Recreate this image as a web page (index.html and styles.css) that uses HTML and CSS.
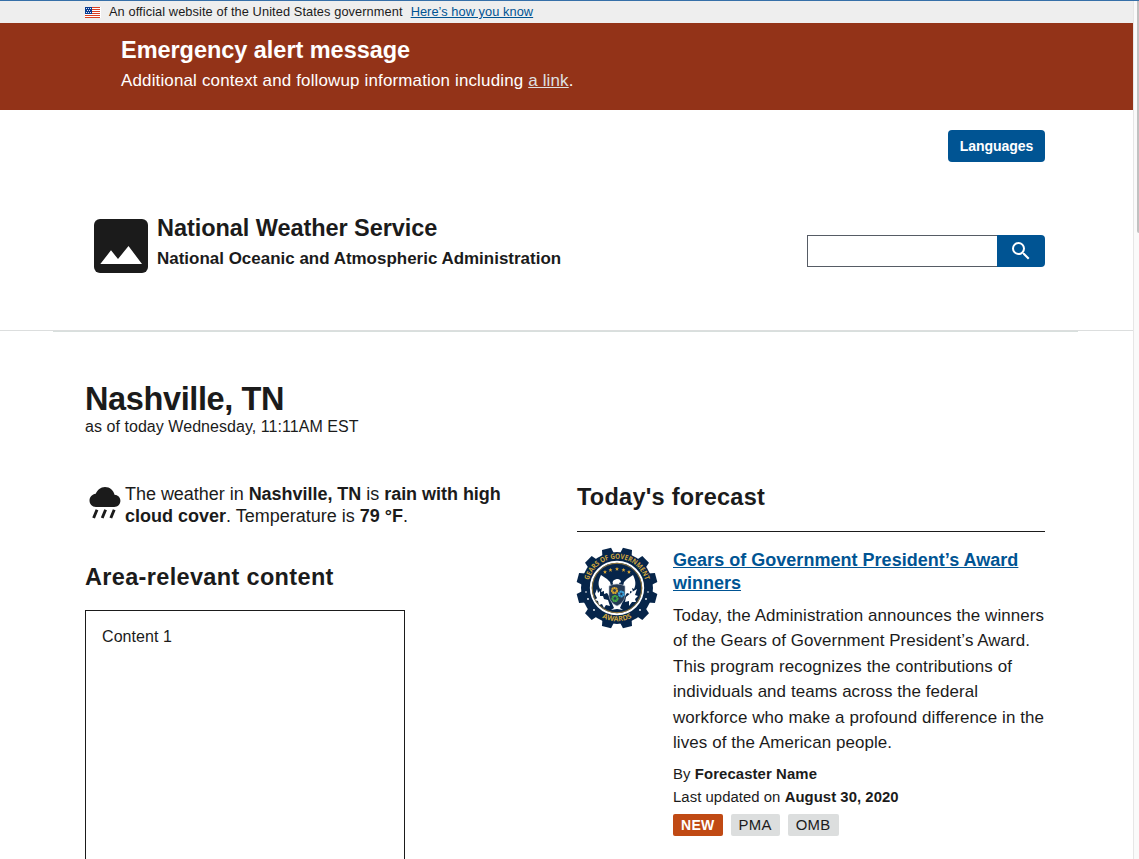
FILE: index.html
```html
<!DOCTYPE html>
<html lang="en">
<head>
<meta charset="utf-8">
<title>National Weather Service</title>
<link rel="stylesheet" href="styles.css">
</head>
<body>
<div class="viewport">
<div class="page">
  <div class="gov-banner">
    <svg class="flag" viewBox="0 0 16 11" shape-rendering="crispEdges"><path fill="#fff" d="M0 0h16v11H0z"/><path fill="#db3e1f" d="M0 0h15v1H0zM0 2h15v1H0zM0 4h15v1H0zM0 6h15v1H0zM0 8h15v1H0zM0 10h15v1H0z"/><path fill="#0b3d91" d="M0 0h7v7H0z"/><path fill="#dfe6f5" d="M1 1h1v1H1zM3 1h1v1H3zM5 1h1v1H5zM2 3h1v1H2zM4 3h1v1H4zM1 5h1v1H1zM3 5h1v1H3zM5 5h1v1H5z"/></svg>
    <span class="gov-text">An official website of the United States government</span>
    <a class="gov-link" href="#">Here’s how you know</a>
  </div>
  <section class="alert">
    <h3 class="alert-title">Emergency alert message</h3>
    <p class="alert-text">Additional context and followup information including <a href="#">a link</a>.</p>
  </section>
  <header class="header">
    <div class="header-inner">
      <button class="languages">Languages</button>
      <div class="brand-row">
        <div class="brand">
          <svg class="logo" viewBox="0 0 54 54"><rect width="54" height="54" rx="6" fill="#1b1b1b"/><path d="M6.300 45 17 31.300l7 8.700 10.500-13L48 45z" fill="#fff"/></svg>
          <div class="brand-text">
            <div class="brand-name">National Weather Service</div>
            <div class="brand-parent">National Oceanic and Atmospheric Administration</div>
          </div>
        </div>
        <form class="search">
          <input class="search-input" type="text" aria-label="Search">
          <button class="search-button" type="button" aria-label="Search"><svg viewBox="0 0 24 24" width="24" height="24"><path fill="#fff" d="M15.500 14h-.790l-.280-.270A6.470 6.470 0 0 0 16 9.500 6.500 6.500 0 1 0 9.500 16c1.610 0 3.090-.590 4.230-1.570l.270.280v.790l5 4.990L20.490 19zm-6 0C7.010 14 5 11.990 5 9.500S7.010 5 9.500 5 14 7.010 14 9.500 11.990 14 9.500 14z"/></svg></button>
        </form>
      </div>
    </div>
    <div class="nav-rule"></div>
  </header>
  <main class="main">
    <h1 class="place">Nashville, TN</h1>
    <p class="as-of">as of today Wednesday, 11:11AM EST</p>
    <div class="columns">
      <div class="left">
        <div class="weather">
          <svg class="rain" viewBox="0 0 32 33"><path fill="#1b1b1b" d="M7 21C3 21 .500 18 .500 14.500c0-3.600 2.700-6 6.200-6.700C8.300 4 11.600 1 16 1c4.800 0 8.700 3.400 9.500 7.800 3.400.3 5.900 2.600 5.900 6 0 3.500-2.700 6.200-6.200 6.200z"/><path stroke="#1b1b1b" stroke-width="2.900" d="m8 23.800-3.400 8.200m12-8.200-3.400 8.200m12-8.200-3.400 8.200"/></svg>
          <p class="weather-text"><span class="line w1">The weather in <b>Nashville, TN</b> is <b>rain with high</b></span> <span class="line w2"><b>cloud cover</b>. Temperature is <b>79 °F</b>.</span></p>
        </div>
        <h2 class="area-title">Area-relevant content</h2>
        <div class="box">Content 1</div>
      </div>
      <div class="right">
        <h2 class="forecast-title">Today's forecast</h2>
        <article class="item">
          <svg class="seal" viewBox="-40 -40 80 80">
            <defs>
              <path id="arcTop" d="M-28.300 6a29 29 0 1 1 56.600 0"/>
              <path id="arcBottom" d="M-33.300 0a33.300 33.300 0 0 0 66.600 0"/>
              <path id="tooth" d="M-6-34-4.700-40.500H4.700L6-34z"/>
              <path id="star" d="m0-2 .6 1.300 1.400.1-1.100.9.400 1.400L0 .9l-1.300.8.400-1.400L-2-.6l1.400-.1z"/>
            </defs>
            <g fill="#06254a">
              <circle r="36"/>
              <use href="#tooth" transform="rotate(15)"/><use href="#tooth" transform="rotate(45)"/><use href="#tooth" transform="rotate(75)"/><use href="#tooth" transform="rotate(105)"/><use href="#tooth" transform="rotate(135)"/><use href="#tooth" transform="rotate(165)"/><use href="#tooth" transform="rotate(195)"/><use href="#tooth" transform="rotate(225)"/><use href="#tooth" transform="rotate(255)"/><use href="#tooth" transform="rotate(285)"/><use href="#tooth" transform="rotate(315)"/><use href="#tooth" transform="rotate(345)"/>
            </g>
            <circle r="26.200" fill="#06254a" stroke="#fff" stroke-width="1.900"/>
            <circle r="24.700" fill="none" stroke="#b58a35" stroke-width=".8"/>
            <text class="seal-text"><textPath href="#arcTop" startOffset="50%" text-anchor="middle" textLength="76" lengthAdjust="spacingAndGlyphs">GEARS OF GOVERNMENT</textPath></text>
            <text class="seal-text"><textPath href="#arcBottom" startOffset="50%" text-anchor="middle" textLength="31" lengthAdjust="spacingAndGlyphs">AWARDS</textPath></text>
            <g fill="#d9a532"><use href="#star" x="-12" y="-16"/><use href="#star" x="-6.500" y="-18"/><use href="#star" y="-19"/><use href="#star" x="6.500" y="-18"/><use href="#star" x="12" y="-16"/></g>
            <g fill="#fff">
              <path d="M-4-4c-1-2 0-4 3-4.700 3-.7 5 .7 5 3L2-5l1 3h-7z"/>
              <path d="M-5 2-7-6-10-9-16-13C-19-7-19-3-17 1l2-1-1 4 3-1 0 3 3-1 2 3zM5 2 7-6 10-9 16-13C19-7 19-3 17 1l-2-1 1 4-3-1 0 3-3-1-2 3z"/>
              <path d="m-20 1 1 4 2-2 0 5 3 0 1 3 4 1 2 6-4-1-2 3-2-4-3 1-1-4-3-1 2-2-2-4zM20 1l-5 3-6 5-1 5 4-1 0 5 3-4 4 0-1-3 3-3-3-1z"/>
              <path d="m-6 13 3 7-3 2 6-1 6 1-3-2 3-7z"/>
              <circle cx="-29" cy="11" r=".9"/><circle cx="29" cy="11" r=".9"/><circle cx="-31" cy="4" r=".8"/><circle cx="31" cy="4" r=".8"/><circle cx="-23" cy="22" r=".9"/><circle cx="23" cy="22" r=".9"/>
            </g>
            <path d="M-8-2Q0-6 8-2v10q-1 7-8 10-7-3-8-10z" fill="#253a55" stroke="#aeb9c6" stroke-width=".6"/>
            <g fill="none" stroke-width="2.200" stroke-dasharray="1.800 .3"><circle cx="-2.500" cy="2.500" r="2.500" stroke="#dba52d"/><circle cx="4.300" cy="6" r="2.300" stroke="#39a1dc"/><circle cx="-2" cy="10.500" r="2.500" stroke="#45a846"/></g>
          </svg>
          <div class="item-body">
            <h3 class="item-title"><a href="#"><span class="line t1">Gears of Government President’s Award</span> <span class="line t2">winners</span></a></h3>
            <p class="item-text"><span class="line p1">Today, the Administration announces the winners</span> <span class="line p2">of the Gears of Government President’s Award.</span> <span class="line p3">This program recognizes the contributions of</span> <span class="line p4">individuals and teams across the federal</span> <span class="line p5">workforce who make a profound difference in the</span> <span class="line p6">lives of the American people.</span></p>
            <div class="meta">By <b>Forecaster Name</b></div>
            <div class="meta meta-date">Last updated on <b>August 30, 2020</b></div>
            <div class="tags"><span class="tag tag-new">NEW</span><span class="tag">PMA</span><span class="tag">OMB</span></div>
          </div>
        </article>
      </div>
    </div>
  </main>
</div>
<div class="scroll-track"><div class="scroll-thumb"></div></div>
</div>
</body>
</html>
```
FILE: styles.css
```css
* { box-sizing: border-box; }
body, h1, h2, h3, p { margin: 0; }
body { font-family: "Liberation Sans", Arial, sans-serif; color: #1b1b1b; background: #fff; overflow: hidden; }
a { color: #005493; text-decoration: underline; }
button, input { font-family: inherit; }
.viewport { display: flex; height: 859px; overflow: hidden; border-top: 1px solid #366fa8; }
.page { flex: 1; min-width: 0; }
.line { display: block; white-space: nowrap; }

.scroll-track { width: 6px; border-left: 1px solid #e6e6e6; background: #fafafa; display: flex; justify-content: flex-end; }
.scroll-thumb { width: 2px; height: 232px; background: #c1c1c1; border-radius: 0 0 0 2px; }

.gov-banner { height: 22px; background: #eee; padding: 0 0 1px 85px; display: flex; align-items: center; font-size: 12.8px; white-space: nowrap; }
.flag { width: 16px; height: 11px; margin: 1px 8px 0 0; }
.gov-text { letter-spacing: .085px; }
.gov-link { margin-left: 8px; letter-spacing: .06px; }

.alert { height: 87px; background: #933318; color: #fff; padding: 13px 0 0 121px; }
.alert-title { font-size: 23.500px; line-height: 28px; letter-spacing: -.04px; }
.alert-text { font-size: 16.960px; line-height: 24px; margin-top: 5px; letter-spacing: .165px; }
.alert-text a { color: #dfe1e2; }

.header { height: 222px; display: flex; flex-direction: column; }
.header-inner { height: 221px; border-bottom: 1px solid #dcdede; padding: 20px 88px 0 94px; display: flex; flex-direction: column; align-items: flex-end; }
.nav-rule { height: 1px; width: 1025px; margin-left: 53px; background: #d8dfdd; }
.languages { width: 97px; height: 32px; border: 0; border-radius: 4px; background: #005493; color: #fff; font-weight: 700; font-size: 14.080px; letter-spacing: -.1px; padding: 0; }
.brand-row { align-self: stretch; display: flex; justify-content: space-between; margin-top: 52px; }
.brand { display: flex; margin-top: 5px; }
.logo { width: 54px; height: 54px; margin-right: 9px; }
.brand-text { font-weight: 700; }
.brand-name { font-size: 23.500px; line-height: 28px; margin-top: -5px; letter-spacing: -.06px; }
.brand-parent { font-size: 16.960px; line-height: 20px; margin-top: 7px; letter-spacing: .015px; }
.search { display: flex; height: 32px; margin-top: 21px; }
.search-input { width: 190px; height: 32px; border: 1px solid #565c65; border-right: 0; border-radius: 0; background: #fff; padding: 0 8px; }
.search-button { width: 48px; height: 32px; border: 0; border-radius: 0 4px 4px 0; background: #005493; padding: 0; display: flex; align-items: center; justify-content: center; }

.main { padding: 48px 88px 0 85px; }
.place { font-size: 32.500px; line-height: 38px; letter-spacing: -.38px; }
.as-of { font-size: 16px; line-height: 18px; letter-spacing: .05px; }
.columns { display: flex; justify-content: space-between; margin-top: 47px; }
.left { width: 440px; }
.weather { display: flex; }
.rain { width: 32px; height: 33px; margin: 3px 4px 0; }
.weather-text { font-size: 18px; line-height: 22px; }
.w1 { letter-spacing: -.03px; }
.area-title { font-size: 23.500px; line-height: 28px; margin-top: 36px; letter-spacing: .34px; }
.box { width: 320px; height: 330px; margin-top: 19px; border: 1px solid #1b1b1b; padding: 16px; font-size: 16px; line-height: 20px; letter-spacing: .08px; }
.right { width: 468px; }
.forecast-title { font-size: 23.500px; line-height: 28px; height: 49px; border-bottom: 1px solid #1b1b1b; letter-spacing: .25px; }
.item { display: flex; gap: 16px; margin-top: 16px; }
.seal { width: 80px; height: 80px; flex: none; overflow: visible; }
.seal-text { font-family: "Open Sans", sans-serif; font-size: 7.200px; font-weight: 700; fill: #d0a53c; }
.item-title { font-size: 18px; line-height: 23px; margin-top: 1px; }
.t1 { letter-spacing: .025px; }
.item-text { font-size: 16.960px; line-height: 25.440px; margin-top: 8px; }
.p1 { letter-spacing: .09px; }
.p2 { letter-spacing: .06px; }
.p3 { letter-spacing: .11px; }
.p4 { letter-spacing: .07px; }
.p5 { letter-spacing: .11px; }
.p6 { letter-spacing: .09px; }
.meta { font-size: 14.880px; line-height: 23px; margin-top: 7px; white-space: nowrap; letter-spacing: .1px; }
.meta-date { margin-top: 0; letter-spacing: .05px; }
.tags { display: flex; gap: 8px; margin-top: 5px; }
.tag { height: 22px; padding: 0 8px; border-radius: 2px; background: #dcdede; font-size: 14.880px; line-height: 22px; letter-spacing: .3px; }
.tag-new { background: #c04a14; color: #fff; font-weight: 700; font-size: 14px; }
```
